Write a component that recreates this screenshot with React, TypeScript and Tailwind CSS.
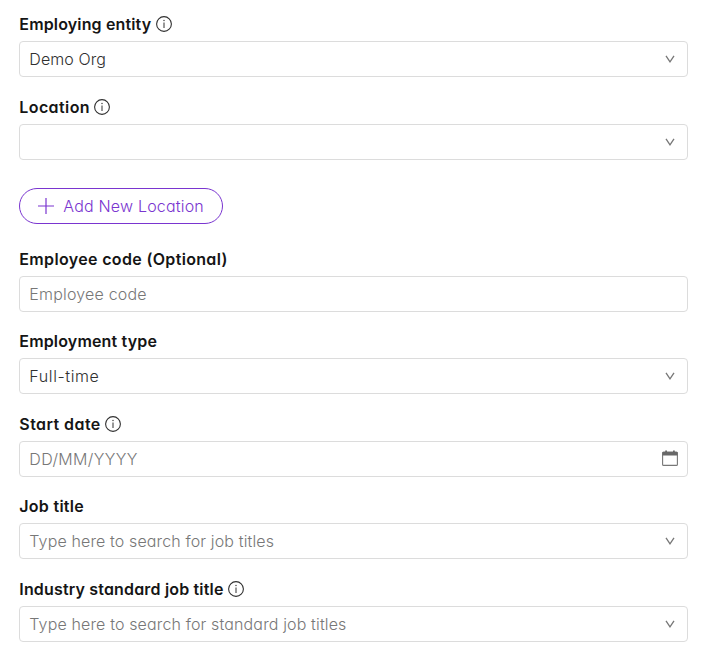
import type { ReactNode } from "react";

function InfoIcon() {
  return (
    <svg className="ml-[4.5px] size-4 shrink-0" viewBox="0 0 16 16" fill="none" stroke="#303030">
      <circle cx="8" cy="8" r="7.4" strokeWidth="1.1" />
      <path d="M8 6.5v5.5" strokeWidth="1" />
      <circle cx="8" cy="4.5" r="0.7" fill="#303030" stroke="none" />
    </svg>
  );
}

function Chevron() {
  return (
    <svg className="mr-[3px] h-2 w-[10px] shrink-0" viewBox="0 0 10 8" fill="none" stroke="#777" strokeWidth="1.3">
      <path d="M1 0.8l4 6L9 0.8" />
    </svg>
  );
}

function CalendarIcon() {
  return (
    <svg className="mb-px size-4 shrink-0" viewBox="0 0 16 16" fill="none">
      <rect x="0.6" y="2.1" width="14.8" height="13.3" rx="1" stroke="#777" strokeWidth="1.1" />
      <path d="M0.5 2h2.7V0.5h1.8V2h6V0.5h1.8V2h2.7v3.6H0.5z" fill="#686868" />
    </svg>
  );
}

type FieldProps = {
  label: string;
  labelClass: string;
  text?: string;
  textClass?: string;
  info?: boolean;
  icon?: ReactNode;
};

function Field({ label, labelClass, text, textClass = "", info, icon }: FieldProps) {
  return (
    <div className="h-[82.5px]">
      <div className="flex h-[27px] items-center pb-[7px] text-[16px] leading-5 font-semibold text-[#151515]">
        <span className={"whitespace-nowrap " + labelClass}>{label}</span>
        {info && <InfoIcon />}
      </div>
      <div className="flex h-9 items-center justify-between rounded-[4px] border border-[#dcdcdc] pr-[9px] pl-[9px] text-[16px]">
        <span className={"whitespace-nowrap " + textClass}>{text}</span>
        {icon}
      </div>
    </div>
  );
}

export default function App() {
  return (
    <main className="h-[658px] w-[710px] overflow-hidden bg-white pt-[14px] pl-[19.3px] font-['Inter',sans-serif] [font-feature-settings:'cv11']">
      <div className="w-[668.7px]">
        <Field label="Employing entity" labelClass="tracking-[0.15px]" info text="Demo Org" textClass="font-[350] tracking-[0.08px] text-[#303030]" icon={<Chevron />} />
        <Field label="Location" labelClass="tracking-[0.4px]" info icon={<Chevron />} />
        <div className="h-[69.6px] pt-[9.2px]">
          <button className="flex h-9 w-[204px] items-center rounded-full border border-[#7a35d0] pl-[18px] text-[16px] font-light text-[#7a35d0]">
            <svg className="mr-[9px] size-4 shrink-0" viewBox="0 0 16 16" stroke="#7a35d0" strokeWidth="1.2">
              <path d="M0 8h16M8 0v16" />
            </svg>
            <span className="tracking-[0.19px] whitespace-nowrap">Add New Location</span>
          </button>
        </div>
        <Field label="Employee code (Optional)" labelClass="tracking-[0.34px]" text="Employee code" textClass="font-light tracking-[0.19px] text-[#777]" />
        <Field label="Employment type" labelClass="tracking-[0.16px]" text="Full-time" textClass="font-[350] tracking-[0.6px] text-[#303030]" icon={<Chevron />} />
        <Field label="Start date" labelClass="tracking-[0.43px]" info text="DD/MM/YYYY" textClass="font-light tracking-[0.36px] text-[#777]" icon={<CalendarIcon />} />
        <Field label="Job title" labelClass="tracking-[0.28px]" text="Type here to search for job titles" textClass="font-light tracking-[0.13px] text-[#777]" icon={<Chevron />} />
        <Field label="Industry standard job title" labelClass="tracking-[0.17px]" info text="Type here to search for standard job titles" textClass="font-light tracking-[0.14px] text-[#777]" icon={<Chevron />} />
      </div>
    </main>
  );
}
